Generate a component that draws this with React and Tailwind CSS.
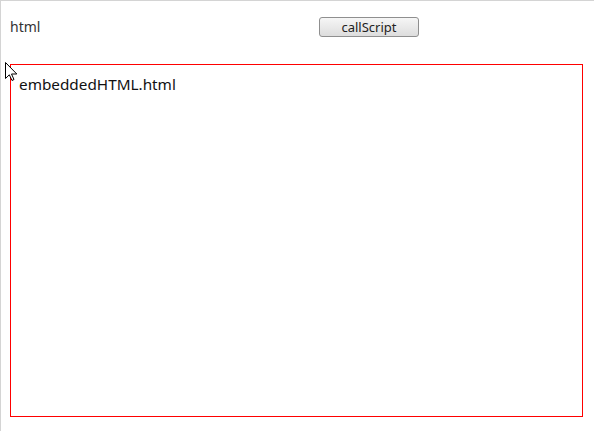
export default function App() {
    return (
        <div
            className="relative w-[594px] h-[431px] bg-white border-t border-l border-[#d4d4d4] overflow-hidden"
            style={{ fontFamily: '"Noto Sans", "Open Sans", sans-serif' }}
        >
            <div className="pl-[9px] pt-[16px]">
                {/* top row */}
                <div className="flex items-center h-[20px]">
                    <span className="w-[309px] text-[14px] text-[#333] leading-none">html</span>
                    <button className="w-[100px] h-[20px] rounded-[3px] border border-[#8f8f8f] bg-gradient-to-b from-[#f6f6f6] to-[#dddddd] text-[13px] text-[#222] leading-none flex items-center justify-center">
                        callScript
                    </button>
                </div>

                {/* embedded frame */}
                <div className="mt-[27px] w-[573px] h-[353px] border border-[#ff0000] pl-[8px] pt-[7px]">
                    <span className="text-[15.3px] text-[#111] leading-none">embeddedHTML.html</span>
                </div>
            </div>

            {/* mouse pointer */}
            <svg className="absolute left-[4px] top-[61px]" width="14" height="20" viewBox="0 0 14 20">
                <path d="M0.5 0.5 L0.5 16.5 L4.3 12.8 L7 18.5 L9 17.5 L6.5 12 L11.8 12 Z" fill="#fff" stroke="#000" strokeWidth="1" strokeLinejoin="miter" />
            </svg>
        </div>
    );
}
